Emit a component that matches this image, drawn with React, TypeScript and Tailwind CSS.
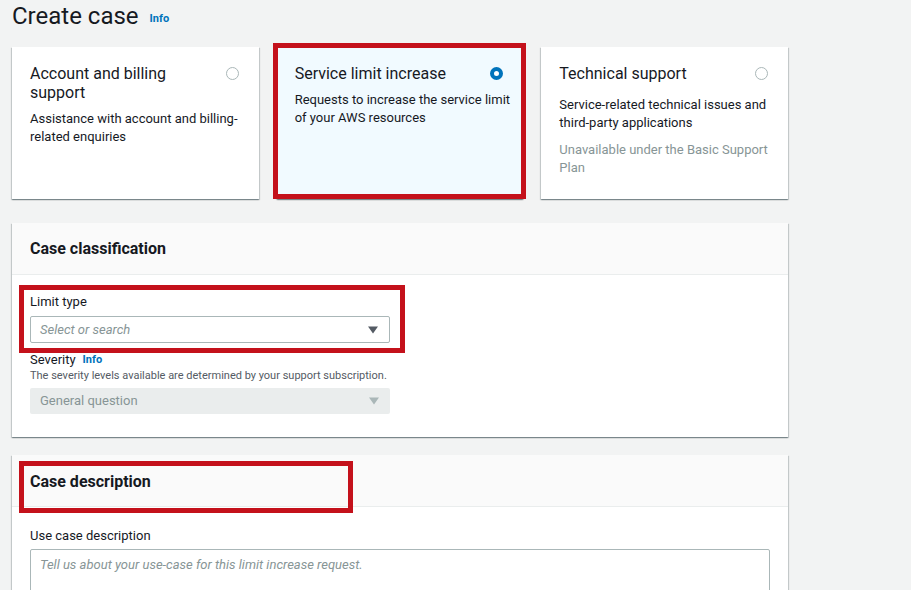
import React from 'react';

const font = { fontFamily: 'Roboto, "Liberation Sans", Arial, sans-serif' };

type Choice = {
  title: string;
  desc: string;
  note?: string;
  selected?: boolean;
};

const choices: Choice[] = [
  {
    title: 'Account and billing support',
    desc: 'Assistance with account and billing-related enquiries',
  },
  {
    title: 'Service limit increase',
    desc: 'Requests to increase the service limit of your AWS resources',
    selected: true,
  },
  {
    title: 'Technical support',
    desc: 'Service-related technical issues and third-party applications',
    note: 'Unavailable under the Basic Support Plan',
  },
];

const Caret = ({ color }: { color: string }) => (
  <svg width="12" height="10" viewBox="0 0 12 10" className="shrink-0">
    <path d="M1 1.5h10L6 8.5z" fill={color} />
  </svg>
);

const Radio = ({ selected }: { selected?: boolean }) =>
  selected ? (
    <span className="mt-[3px] block h-[13px] w-[13px] shrink-0 rounded-full border-[4px] border-[#0073bb] bg-white" />
  ) : (
    <span className="mt-[3px] block h-[13px] w-[13px] shrink-0 rounded-full border border-[#aab7b8] bg-white" />
  );

const Card = ({ c }: { c: Choice }) => (
  <div
    className={`relative h-[152px] pl-[18px] pr-[10px] pt-[17px] shadow-[0_1px_1px_0_rgba(0,28,36,0.3),1px_1px_1px_0_rgba(0,28,36,0.15),-1px_1px_1px_0_rgba(0,28,36,0.15)] ${
      c.selected ? 'bg-[#f1faff]' : 'bg-white'
    }`}
  >
    <div className="flex items-start justify-between gap-4 pr-[10px]">
      <div className="text-[16px] leading-[19px] text-[#16191f]">{c.title}</div>
      <Radio selected={c.selected} />
    </div>
    <div className={`${c.note ? 'mt-[13px]' : 'mt-[8px]'} text-[13px] leading-[18px] text-[#16191f]`}>{c.desc}</div>
    {c.note && <div className="mt-[9px] text-[13px] leading-[18px] text-[#879596]">{c.note}</div>}
    {c.selected && (
      <div className="pointer-events-none absolute -left-[4px] -right-[3px] -top-[4px] bottom-0 border-[5px] border-[#c4111b]" />
    )}
  </div>
);

const Section = ({ title, boxed, children }: { title: string; boxed?: boolean; children: React.ReactNode }) => (
  <div className="bg-white shadow-[0_1px_1px_0_rgba(0,28,36,0.3),1px_1px_1px_0_rgba(0,28,36,0.15),-1px_1px_1px_0_rgba(0,28,36,0.15)]">
    <div
      className={`relative flex h-[52px] items-center border-b border-[#eaeded] bg-[#fafafa] px-[18px] ${
        boxed ? 'pt-[3px]' : ''
      }`}
    >
      <h2 className="text-[16px] font-bold text-[#16191f]">{title}</h2>
      {boxed && (
        <div className="pointer-events-none absolute left-[7px] top-[6px] h-[52px] w-[334px] border-[5px] border-[#c4111b]" />
      )}
    </div>
    {children}
  </div>
);

export default function App() {
  return (
    <div className="h-[590px] w-full overflow-hidden bg-[#f2f3f3]" style={font}>
      <div className="w-[788px] pl-[12px]">
        <div className="flex items-end gap-[11px] pt-[2px]">
          <h1 className="text-[24px] leading-[28px] text-[#16191f]">Create case</h1>
          <span className="mb-[3px] text-[11px] font-bold text-[#0073bb]">Info</span>
        </div>

        <div className="mt-[17px] grid grid-cols-3 gap-[18px]">
          {choices.map((c) => (
            <Card key={c.title} c={c} />
          ))}
        </div>

        <div className="mt-[24px]">
          <Section title="Case classification">
            <div className="px-[18px] pb-[23px] pt-[10px]">
              <div className="relative w-[360px] pt-[9px] pb-[10px]">
                <div className="pointer-events-none absolute -left-[11px] -right-[15px] top-0 bottom-0 border-[5px] border-[#c4111b]" />
                <div className="text-[13px] leading-[16px] text-[#16191f]">Limit type</div>
                <div className="mt-[6px] flex h-[27px] items-center justify-between rounded-[2px] border border-[#aab7b8] bg-white pl-[9px] pr-[10px]">
                  <span className="text-[13px] italic text-[#879596]">Select or search</span>
                  <Caret color="#545b64" />
                </div>
              </div>
              <div className="mt-[-1px] flex items-center gap-[7px]">
                <span className="text-[13px] leading-[16px] text-[#16191f]">Severity</span>
                <span className="text-[11px] font-bold leading-[16px] text-[#0073bb]">Info</span>
              </div>
              <div className="text-[11px] leading-[16px] text-[#545b64]">
                The severity levels available are determined by your support subscription.
              </div>
              <div className="mt-[4px] flex h-[26px] w-[360px] items-center justify-between rounded-[2px] bg-[#eaeded] pl-[10px] pr-[10px]">
                <span className="text-[13px] text-[#879596]">General question</span>
                <Caret color="#aab7b8" />
              </div>
            </div>
          </Section>
        </div>

        <div className="mt-[18px]">
          <Section title="Case description" boxed>
            <div className="px-[18px] pt-[21px] pb-[20px]">
              <div className="text-[13px] leading-[16px] text-[#16191f]">Use case description</div>
              <div className="mt-[5px] h-[80px] w-[740px] rounded-[2px] border border-[#aab7b8] bg-white px-[9px] pt-[2px]">
                <span className="text-[13px] italic text-[#879596]">
                  Tell us about your use-case for this limit increase request.
                </span>
              </div>
            </div>
          </Section>
        </div>
      </div>
    </div>
  );
}
